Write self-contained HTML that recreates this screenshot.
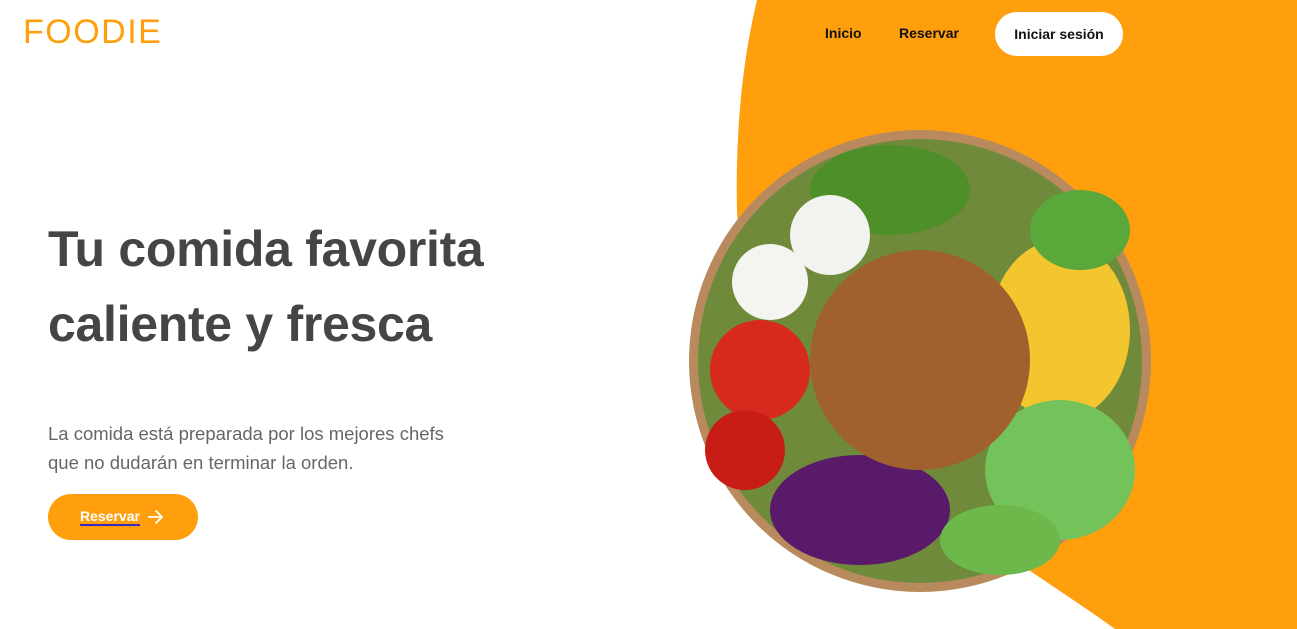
<!DOCTYPE html>
<html><head><meta charset="utf-8"><style>
*{margin:0;padding:0;box-sizing:border-box}
body{width:1297px;height:629px;overflow:hidden;background:#fff;font-family:"Liberation Sans",sans-serif;position:relative}
.bg{position:absolute;left:0;top:0}
.logo{position:absolute;left:23px;top:13px;color:#FF9F0D;font-size:34px;letter-spacing:1.5px;font-weight:400}
.nav a{position:absolute;top:25px;font-size:14px;font-weight:bold;color:#111;text-decoration:none}
.btn{position:absolute;left:995px;top:12px;width:128px;height:44px;border-radius:22px;background:#fff;color:#111;font-size:14px;font-weight:bold;text-align:center;line-height:44px}
h1{position:absolute;left:48px;top:212px;font-size:50px;line-height:75px;color:#454545;font-weight:bold;letter-spacing:-0.3px}
p{position:absolute;left:48px;top:419px;font-size:18.5px;line-height:29px;color:#666}
.cta{position:absolute;left:48px;top:494px;width:150px;height:46px;border-radius:23px;background:#FF9F0D;color:#fff;font-weight:bold;font-size:14px}
.cta span{position:absolute;left:32px;top:15px;border-bottom:2px solid #3a2bbf;line-height:15px}
.cta svg{position:absolute;left:100px;top:16px}
</style></head><body>
<svg class="bg" width="1297" height="629">
<path d="M757 0 L1297 0 L1297 629 L1115 629 C1000 545 745 410 737 210 C735 120 745 50 757 0 Z" fill="#FF9F0D"/>
<circle cx="920" cy="361" r="231" fill="#b88a5e"/>
<circle cx="920" cy="361" r="222" fill="#6f8a3a"/>
<circle cx="760" cy="370" r="50" fill="#d62a1e"/>
<circle cx="745" cy="450" r="40" fill="#c81d17"/>
<ellipse cx="860" cy="510" rx="90" ry="55" fill="#5a1a6a"/>
<ellipse cx="1060" cy="330" rx="70" ry="90" fill="#f3c52e"/>
<ellipse cx="1060" cy="470" rx="75" ry="70" fill="#74c25a"/>
<ellipse cx="920" cy="360" rx="110" ry="110" fill="#a0612e"/>
<ellipse cx="890" cy="190" rx="80" ry="45" fill="#4f8f2a"/>
<circle cx="830" cy="235" r="40" fill="#f2f2ee"/>
<circle cx="770" cy="282" r="38" fill="#f4f4f0"/>
<ellipse cx="1080" cy="230" rx="50" ry="40" fill="#5aa83a"/>
<ellipse cx="1000" cy="540" rx="60" ry="35" fill="#6cb84b"/>
</svg>
<div class="logo">FOODIE</div>
<div class="nav"><a style="left:825px">Inicio</a><a style="left:899px">Reservar</a></div>
<div class="btn">Iniciar sesión</div>
<h1>Tu comida favorita<br>caliente y fresca</h1>
<p>La comida está preparada por los mejores chefs<br>que no dudarán en terminar la orden.</p>
<div class="cta"><span>Reservar</span><svg width="16" height="14" viewBox="0 0 16 14"><path d="M1 7H14M8 1L14 7L8 13" stroke="#fff" stroke-width="1.8" fill="none" stroke-linecap="round" stroke-linejoin="round"/></svg></div>
</body></html>
